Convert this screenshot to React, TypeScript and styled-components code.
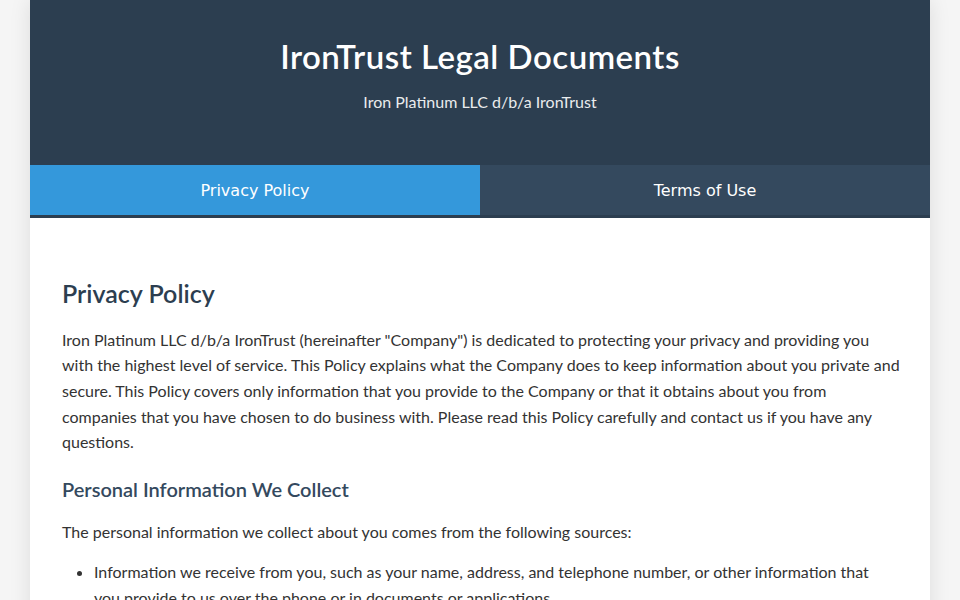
import React, { useState } from "react";
import styled, { createGlobalStyle } from "styled-components";

const GlobalStyle = createGlobalStyle`
  * {
    box-sizing: border-box;
  }

  body {
    margin: 0;
    background: #f5f5f5;
    color: #333;
    font-family: "Segoe UI", Lato, "Open Sans", sans-serif;
    font-size: 16px;
    line-height: 1.6;
  }
`;

const Container = styled.div`
  max-width: 900px;
  margin: 0 auto;
  background: #fff;
  box-shadow: 0 0 20px rgba(0, 0, 0, 0.1);
  min-height: 100vh;
`;

const Header = styled.header`
  background: #2c3e50;
  color: #fff;
  text-align: center;
  padding: 37px 20px 50px;

  h1 {
    margin: 0 0 14px;
    font-size: 33px;
    font-weight: 600;
    letter-spacing: 0.5px;
    line-height: 38.4px;
  }

  p {
    margin: 0;
    opacity: 0.9;
  }
`;

const TabBar = styled.nav`
  display: flex;
  background: #34495e;
  border-bottom: 3px solid #2c3e50;
`;

const TabButton = styled.button<{ $active: boolean }>`
  flex: 1;
  height: 50px;
  border: none;
  padding: 0;
  cursor: pointer;
  font-family: "DejaVu Sans", sans-serif;
  font-size: 16px;
  color: #fff;
  background: ${(p) => (p.$active ? "#3498db" : "#34495e")};
  transition: background 0.3s;

  &:hover {
    background: ${(p) => (p.$active ? "#3498db" : "#3d566e")};
  }
`;

const Content = styled.main`
  padding: 40px 30px 40px 32px;

  h2 {
    margin: 21px 0 19px;
    font-size: 25px;
    font-weight: 600;
    line-height: 1.15;
    color: #2c3e50;
  }

  h3 {
    margin: 22px 0 18px;
    font-size: 20px;
    font-weight: 600;
    line-height: 1.2;
    color: #34495e;
  }

  p {
    margin: 0 0 15px;
  }

  ul {
    margin: 0 0 16px;
    padding: 0 6px 0 32px;
  }

  li {
    margin-bottom: 8px;
  }
`;

const PrivacyPolicy = () => (
  <>
    <h2>Privacy Policy</h2>
    <p>
      Iron Platinum LLC d/b/a IronTrust (hereinafter "Company") is dedicated to
      protecting your privacy and providing you with the highest level of
      service. This Policy explains what the Company does to keep information
      about you private and secure. This Policy covers only information that you
      provide to the Company or that it obtains about you from companies that
      you have chosen to do business with. Please read this Policy carefully and
      contact us if you have any questions.
    </p>
    <h3>Personal Information We Collect</h3>
    <p>The personal information we collect about you comes from the following sources:</p>
    <ul>
      <li>
        Information we receive from you, such as your name, address, and
        telephone number, or other information that you provide to us over the
        phone or in documents or applications.
      </li>
      <li>
        Information about your transactions with us, our affiliates, or others.
      </li>
      <li>Information we receive from consumer reporting agencies.</li>
    </ul>
  </>
);

const TermsOfUse = () => (
  <>
    <h2>Terms of Use</h2>
    <p>
      By accessing or using the services of Iron Platinum LLC d/b/a IronTrust,
      you agree to be bound by these Terms of Use. Please read them carefully.
    </p>
  </>
);

const App = (): JSX.Element => {
  const [tab, setTab] = useState<"privacy" | "terms">("privacy");

  return (
    <>
      <GlobalStyle />
      <Container>
        <Header>
          <h1>IronTrust Legal Documents</h1>
          <p>Iron Platinum LLC d/b/a IronTrust</p>
        </Header>
        <TabBar>
          <TabButton $active={tab === "privacy"} onClick={() => setTab("privacy")}>
            Privacy Policy
          </TabButton>
          <TabButton $active={tab === "terms"} onClick={() => setTab("terms")}>
            Terms of Use
          </TabButton>
        </TabBar>
        <Content>{tab === "privacy" ? <PrivacyPolicy /> : <TermsOfUse />}</Content>
      </Container>
    </>
  );
};

export default App;
